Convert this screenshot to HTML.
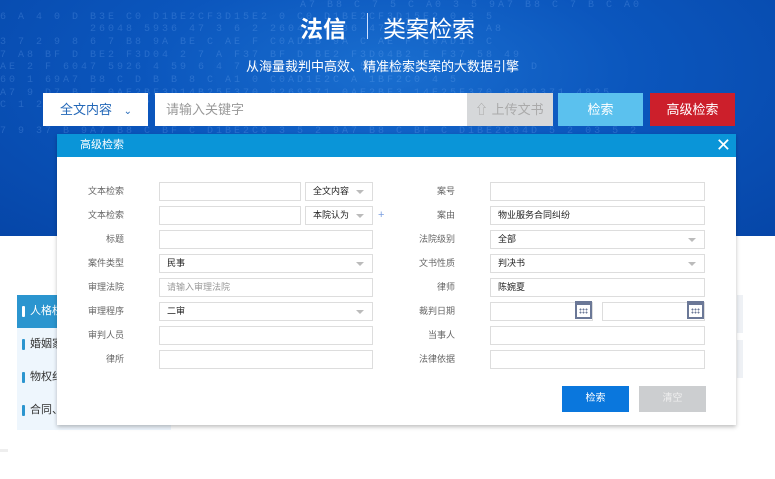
<!DOCTYPE html>
<html><head><meta charset="utf-8"><style>
*{margin:0;padding:0;box-sizing:border-box}
body{width:775px;height:479px;overflow:hidden;background:#fff;font-family:"Liberation Sans","Noto Sans CJK SC",sans-serif;position:relative}
.hero{position:absolute;left:0;top:0;width:775px;height:236px;background:radial-gradient(ellipse at 50% 30%,#1a6fd0 0%,#0b56bd 45%,#0646a8 100%);overflow:hidden}
.code{position:absolute;color:rgba(140,190,255,.22);font-family:"Liberation Mono",monospace;font-size:10px;white-space:nowrap;letter-spacing:3px}
.a{position:absolute}
.t1{left:300px;top:10px;color:#fff;font-size:23px;font-weight:bold}
.t2{left:383px;top:10px;color:#fff;font-size:23px}
.sep{left:367px;top:13px;width:1px;height:26px;background:#cfe0ff}
.sub{left:246px;top:56px;color:#fff;font-size:13px}
.box{position:absolute;top:93px;height:33px;font-size:13px;line-height:33px}
.modal{position:absolute;left:57px;top:134px;width:679px;height:291px;background:#fff;box-shadow:0 2px 4px rgba(0,0,0,.25)}
.mh{height:23px;background:#0a95d8;color:#fff;font-size:11px;line-height:23px;padding-left:23px;position:relative}
.lab{position:absolute;font-size:9px;color:#666;text-align:right;width:70px;line-height:19px}
.in{position:absolute;height:19px;border:1px solid #ddd;font-size:9px;line-height:17px;padding-left:7px;color:#222;background:#fff}
.dd::after{content:"";position:absolute;right:8px;top:7px;border:4px solid transparent;border-top:4px solid #bbb}
.list{position:absolute;left:17px;top:295px;width:154px;height:135px;background:#eef6fd}
.li{position:absolute;left:0;width:154px;height:33px;font-size:11px;color:#333;line-height:33px;padding-left:13px}
.li::before{content:"";position:absolute;left:5px;top:11px;width:3px;height:11px;background:#2b95cf;border-radius:1px}
.li.on::before{background:#fff}
.cal{position:absolute;width:17px;height:18px;border:2px solid #6b7897;border-top-width:4px;background:#fff}
.cal::after{content:"";position:absolute;left:2px;top:3px;width:9px;height:6px;background:radial-gradient(circle,#6b7897 0.9px,transparent 1.1px) 0 0/3px 3px}
</style></head><body>
<div class="hero">
<div class="code" style="left:300px;top:0">A7 B8 C 7 5 C A0 3 5 9A7 B8 C 7 B C A0</div>
<div class="code" style="left:0;top:12px">6 A 4 0 D B3E C0 D1BE2CF3D15E2 0 C0 D1BE2CF3D15E2 0 3 5</div>
<div class="code" style="left:90px;top:24px">26048 5936 47 3 6 2 26048 5936 47 36 8 59 6 A8</div>
<div class="code" style="left:0;top:37px">3 7 2 9 8 6 7 B8 9A BE C AE F C0AD1B 9A C AE F C0AD1B C</div>
<div class="code" style="left:0;top:50px">7 A8 BF D BE2 F3D04 2 7 A F37 BF D BE2 F3D04B2 E F37 58 49</div>
<div class="code" style="left:0;top:62px">AE 2 F 6047 5926 4 59 6 4 7 8 C9 F 6047 5926 4 59 6 7 8 C9 D</div>
<div class="code" style="left:0;top:75px">60 1 69A7 B8 C D B B 8 C A1 0 C0AD1E2C A 1BF2C0 4 5</div>
<div class="code" style="left:0;top:88px">A7 9 D7 B F 0AE2BF3D14B25F370 8269371 0AE2BF3 14E25F370 8269371 4825</div>
<div class="code" style="left:0;top:100px">C 1 2 60715936 47 59 6 A8 9 A 1 2 0 715936 47 59 6 A8 9 A C</div>
<div class="code" style="left:0;top:126px">7 9 37 B 9A7 B8 C BF C D1BE2C0 3 5 2 9A7 B8 C BF C D1BE2C04D 5 2 03 5 2</div>
</div>
<div class="a t1">法信</div><div class="a sep"></div><div class="a t2">类案检索</div>
<div class="a sub">从海量裁判中高效、精准检索类案的大数据引擎</div>
<div class="box" style="left:43px;width:105px;background:#fff;color:#2468b8;padding-left:17px">全文内容 <span style="font-size:10px;margin-left:8px">⌄</span></div>
<div class="box" style="left:155px;width:312px;background:#fff;color:#999;padding-left:11px">请输入关键字</div>
<div class="box" style="left:467px;width:86px;background:#d6d8da;color:#aaa;padding-left:8px">⇧ 上传文书</div>
<div class="box" style="left:558px;width:85px;background:#5bc1ee;color:#fff;text-align:center">检索</div>
<div class="box" style="left:650px;width:85px;background:#cc1f2b;color:#fff;text-align:center">高级检索</div>

<div class="list">
<div class="li on" style="top:0;background:#2b95cf;color:#fff">人格权</div>
<div class="li" style="top:33px">婚姻家</div>
<div class="li" style="top:66px">物权纠</div>
<div class="li" style="top:99px">合同、</div>
</div>
<div class="a" style="left:0;top:449px;width:8px;height:3px;background:#eee"></div>
<div class="a" style="left:737px;top:295px;width:6px;height:38px;background:#eef1f5"></div>
<div class="a" style="left:737px;top:340px;width:6px;height:38px;background:#eef1f5"></div>

<div class="modal">
<div class="mh">高级检索<span style="position:absolute;right:5px;top:0;font-size:18px">✕</span></div>
</div>
<div class="lab" style="left:54px;top:182px">文本检索</div>
<div class="lab" style="left:54px;top:206px">文本检索</div>
<div class="lab" style="left:54px;top:230px">标题</div>
<div class="lab" style="left:54px;top:254px">案件类型</div>
<div class="lab" style="left:54px;top:278px">审理法院</div>
<div class="lab" style="left:54px;top:302px">审理程序</div>
<div class="lab" style="left:54px;top:326px">审判人员</div>
<div class="lab" style="left:54px;top:350px">律所</div>
<div class="in" style="left:159px;top:182px;width:142px"></div>
<div class="in dd" style="left:305px;top:182px;width:68px">全文内容</div>
<div class="in" style="left:159px;top:206px;width:142px"></div>
<div class="in dd" style="left:305px;top:206px;width:68px">本院认为</div>
<div class="a" style="left:378px;top:209px;color:#7a9ee0;font-size:11px">+</div>
<div class="in" style="left:159px;top:230px;width:214px"></div>
<div class="in dd" style="left:159px;top:254px;width:214px">民事</div>
<div class="in" style="left:159px;top:278px;width:214px;color:#999">请输入审理法院</div>
<div class="in dd" style="left:159px;top:302px;width:214px">二审</div>
<div class="in" style="left:159px;top:326px;width:214px"></div>
<div class="in" style="left:159px;top:350px;width:214px"></div>

<div class="lab" style="left:385px;top:182px">案号</div>
<div class="lab" style="left:385px;top:206px">案由</div>
<div class="lab" style="left:385px;top:230px">法院级别</div>
<div class="lab" style="left:385px;top:254px">文书性质</div>
<div class="lab" style="left:385px;top:278px">律师</div>
<div class="lab" style="left:385px;top:302px">裁判日期</div>
<div class="lab" style="left:385px;top:326px">当事人</div>
<div class="lab" style="left:385px;top:350px">法律依据</div>
<div class="in" style="left:490px;top:182px;width:215px"></div>
<div class="in" style="left:490px;top:206px;width:215px">物业服务合同纠纷</div>
<div class="in dd" style="left:490px;top:230px;width:215px">全部</div>
<div class="in dd" style="left:490px;top:254px;width:215px">判决书</div>
<div class="in" style="left:490px;top:278px;width:215px">陈婉夏</div>
<div class="in" style="left:490px;top:302px;width:103px"></div>
<div class="in" style="left:602px;top:302px;width:103px"></div>
<div class="cal" style="left:575px;top:301px"></div>
<div class="cal" style="left:687px;top:301px"></div>
<div class="in" style="left:490px;top:326px;width:215px"></div>
<div class="in" style="left:490px;top:350px;width:215px"></div>
<div class="a" style="left:562px;top:386px;width:67px;height:26px;background:#0a77dd;color:#fff;font-size:10px;line-height:26px;text-align:center">检索</div>
<div class="a" style="left:639px;top:386px;width:67px;height:26px;background:#ccced0;color:#eee;font-size:10px;line-height:26px;text-align:center">清空</div>
</body></html>
